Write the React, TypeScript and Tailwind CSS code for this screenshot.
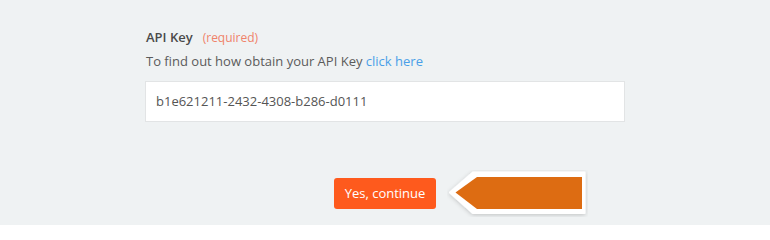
export default function App() {
  return (
    <div className="w-[770px] h-[225px] overflow-hidden bg-[#eff2f3] pl-[145px] pt-[28px] font-['Open_Sans',sans-serif]">
      <div className="flex items-center h-[20px] pl-[1px]">
        <span className="text-[13px] font-semibold text-[#4a4a4a]">API Key</span>
        <span className="ml-[10px] text-[12px] text-[#f0826a]">(required)</span>
      </div>
      <p className="mt-[3px] pl-[1px] text-[13px] leading-[20px] text-[#5b5b5b]">
        To find out how obtain your API Key <a className="text-[#4a9fe8]">click here</a>
      </p>
      <div className="mt-[10px] w-[480px] h-[41px] border border-[#e2e4e5] bg-white flex items-center px-[10px] text-[13px] text-[#555]">
        b1e621211-2432-4308-b286-d0111
      </div>
      <div className="mt-[56px] ml-[189px] flex items-start">
        <button className="h-[31px] w-[102px] rounded-[3px] bg-[#fe5a1d] text-white text-[13px]">
          Yes, continue
        </button>
        <svg width="141" height="47" viewBox="0 0 141 47" className="ml-[11px] -mt-[8px]">
          <defs>
            <filter id="sh" x="-10%" y="-20%" width="120%" height="140%">
              <feDropShadow dx="0" dy="1" stdDeviation="2" floodColor="#000" floodOpacity="0.2" />
            </filter>
          </defs>
          <polygon
            points="3,22.5 26,2.5 137.5,2.5 137.5,43 26,43"
            fill="#ffffff"
            stroke="#ffffff"
            strokeWidth="2"
            strokeLinejoin="round"
            filter="url(#sh)"
          />
          <polygon points="8.5,22.5 30,7 135,7 135,39 30,39" fill="#dd6c12" />
        </svg>
      </div>
    </div>
  );
}
